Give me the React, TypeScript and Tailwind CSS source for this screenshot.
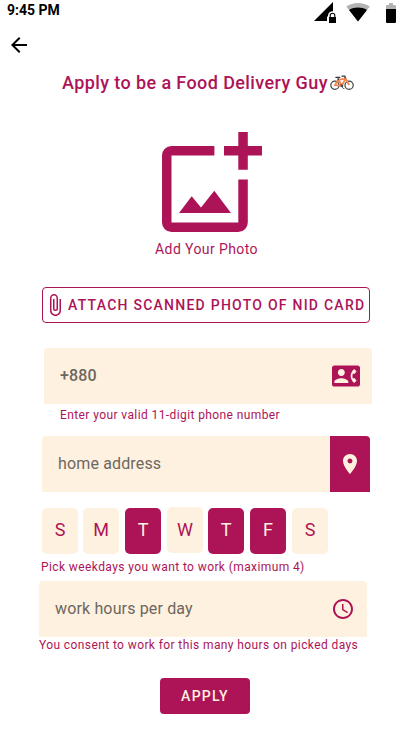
import type { ReactNode } from "react";
import {
  MdAccessTime,
  MdArrowBack,
  MdAttachFile,
  MdContactPhone,
  MdLocationOn,
} from "react-icons/md";

function StatusBar() {
  return (
    <header className="flex h-6 items-start justify-between pl-[7px] pr-[15px]">
      <span className="pt-px text-[14px] leading-[18px] font-bold text-black">9:45 PM</span>
      <svg width="82" height="24" viewBox="0 0 82 24" aria-hidden="true">
        <path d="M0 21 L19 2 V11.2 C15.5 11.2 14 13.5 14 16 L13 17 V21 Z" fill="#000" />
        <rect x="15" y="17" width="7" height="6" fill="#000" />
        <path d="M16.2 17 V15.5 a2.3 2.3 0 0 1 4.6 0 V17" fill="none" stroke="#000" strokeWidth="1.1" />
        <path d="M44 21.5 L32.2 6.5 C39 1.7 49 1.7 55.8 6.5 Z" fill="#b3b3b3" />
        <path d="M44 21.5 L35 10 C40.5 6.8 47.5 6.8 53 10 Z" fill="#000" />
        <path d="M72 9 V6 q0 -1 1 -1 h2 V3 h4 v2 h2 q1 0 1 1 V9 Z" fill="#b3b3b3" />
        <path d="M72 9 h10 v13 q0 1 -1 1 h-8 q-1 0 -1 -1 Z" fill="#000" />
      </svg>
    </header>
  );
}

function Bicycle() {
  return (
    <svg className="mt-px" width="24" height="16" viewBox="0 0 24 16" fill="none" aria-hidden="true">
      <circle cx="4.9" cy="10.2" r="4.1" stroke="#3b4146" strokeWidth="1.2" />
      <circle cx="19.1" cy="10.2" r="4.1" stroke="#3b4146" strokeWidth="1.2" />
      <path d="M4.9 10.2 L8.4 4.6 L11.8 10.5 Z M8.4 4.6 L15.6 3.8 L11.8 10.5 M14.8 1.8 L19.1 10.2" stroke="#f5854a" strokeWidth="1.8" strokeLinejoin="round" />
      <path d="M8.4 4.6 L7.8 2.6 M5.9 2.4 H9.8 M12 1.2 H14.8 L15.2 3" stroke="#33383d" strokeWidth="1.2" strokeLinecap="round" />
      <circle cx="11.8" cy="10.8" r="1.5" fill="#4b5258" />
      <path d="M11.8 11 L13.2 13.5 H14.4" stroke="#4b5258" strokeWidth="0.9" />
    </svg>
  );
}

function PhotoPicker() {
  return (
    <button className="mt-[36px] flex flex-col items-center self-center">
      <svg className="ml-[13px]" width="100" height="100" viewBox="0 0 100 100" fill="#ad1457" aria-hidden="true">
        <path d="M52.4 14 H9.5 A9.5 9.5 0 0 0 0 23.5 V90.5 A9.5 9.5 0 0 0 9.5 100 H76.3 A9.5 9.5 0 0 0 85.8 90.5 V47.5 H76.3 V90.5 H9.5 V23.5 H52.4 Z" />
        <path d="M76.3 0 H85.8 V14 H100 V23.5 H85.8 V37.8 H76.3 V23.5 H62 V14 H76.3 Z" />
        <path d="M17 81 L29.7 64.2 L39 75.5 L52.3 58.7 L69 81 Z" />
      </svg>
      <span className="mt-[7px] ml-[2px] text-[14px] leading-5 tracking-[0.4px]">Add Your Photo</span>
    </button>
  );
}

function Field({ label, children, className = "" }: { label: string; children: ReactNode; className?: string }) {
  return (
    <div className={`flex h-14 w-[328px] items-center justify-between overflow-hidden rounded-t bg-[#fff1df] pl-4 text-[16px] tracking-[0.15px] text-[#6d675f] ${className}`}>
      <span>{label}</span>
      {children}
    </div>
  );
}

const days = [
  { label: "S", style: "pb-[3px] bg-[#fff1df]" },
  { label: "M", style: "ml-[5px] pb-[3px] bg-[#fff1df]" },
  { label: "T", style: "ml-[6px] pb-[3px] bg-[#ad1457] text-[#fff1df]" },
  { label: "W", style: "ml-[6px] -mt-px mb-px pb-px bg-[#fff1df]" },
  { label: "T", style: "ml-[5px] pb-[3px] bg-[#ad1457] text-[#fff1df]" },
  { label: "F", style: "ml-[6px] pb-[3px] bg-[#ad1457] text-[#fff1df]" },
  { label: "S", style: "ml-[6px] pb-[3px] bg-[#fff1df]" },
];

export default function App() {
  return (
    <main className="flex h-[731px] w-[411px] flex-col overflow-hidden bg-white font-['Roboto',sans-serif] text-[#ad1457]">
      <StatusBar />
      <button className="mt-[9px] ml-[7px] size-6 text-black" aria-label="Back">
        <MdArrowBack size={24} />
      </button>
      <h1 className="mt-[11px] ml-[62px] flex h-7 items-center gap-[2px] text-[18px] font-medium tracking-[0.4px] whitespace-nowrap">
        <span>Apply to be a Food Delivery Guy</span>
        <Bicycle />
      </h1>
      <PhotoPicker />
      <button className="mt-[28px] ml-[42px] flex h-9 w-[328px] items-center rounded border border-[#ad1457] whitespace-nowrap">
        <MdAttachFile size={24} className="shrink-0" />
        <span className="ml-px text-[14px] font-medium tracking-[1.25px]">ATTACH SCANNED PHOTO OF NID CARD</span>
      </button>

      <Field label="+880" className="mt-[25px] ml-[44px] font-medium">
        <MdContactPhone size={28} className="mr-3 text-[#ad1457]" />
      </Field>
      <p className="mt-[3px] ml-[60px] text-[12px] leading-4 tracking-[0.4px]">Enter your valid 11-digit phone number</p>

      <Field label="home address" className="mt-[13px] ml-[42px]">
        <button className="flex h-14 w-10 items-center justify-center bg-[#ad1457] text-[#fff1df]" aria-label="Pick location">
          <MdLocationOn size={24} />
        </button>
      </Field>

      <div className="mt-4 ml-[42px] flex h-[46px]">
        {days.map((day, i) => (
          <button key={i} className={`flex w-9 items-center justify-center rounded-[5px] text-[18px] ${day.style}`}>
            {day.label}
          </button>
        ))}
      </div>
      <p className="mt-[5px] ml-[41px] text-[12px] leading-4 tracking-[0.4px]">Pick weekdays you want to work (maximum 4)</p>

      <Field label="work hours per day" className="mt-[6px] ml-[39px]">
        <MdAccessTime size={24} className="mr-3 text-[#ad1457]" />
      </Field>
      <p className="ml-[39px] text-[12px] leading-4 tracking-[0.4px]">You consent to work for this many hours on picked days</p>

      <button className="mt-[25px] ml-[160px] h-9 w-[90px] rounded bg-[#ad1457] text-[14px] font-medium tracking-[1.25px] text-[#fff1df]">
        APPLY
      </button>
    </main>
  );
}
